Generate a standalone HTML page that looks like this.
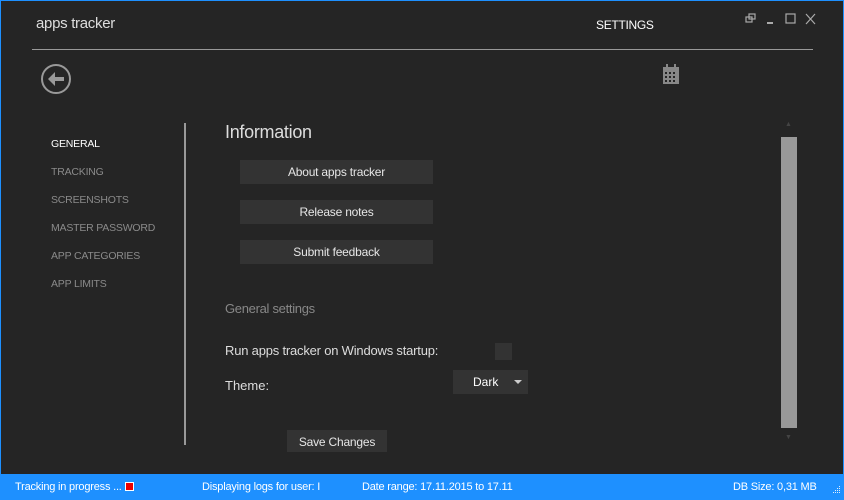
<!DOCTYPE html>
<html><head><style>
*{margin:0;padding:0;box-sizing:border-box}
body{width:844px;height:500px;background:#1e90ff;font-family:"Liberation Sans",sans-serif;overflow:hidden;position:relative}
#win{position:absolute;left:1px;top:1px;width:842px;height:473px;background:#252525}
.t{position:absolute;white-space:nowrap}
.nav{position:absolute;left:50px;font-size:10.5px;color:#8a8a8a;letter-spacing:-0.2px}
.btn{position:absolute;left:239px;width:193px;height:24px;background:#333;color:#e6e6e6;font-size:12px;text-align:center;line-height:24px;letter-spacing:-0.2px}
.sb{position:absolute;top:474px;font-size:11px;color:#fff;line-height:26px;letter-spacing:-0.2px}
</style></head><body>
<div id="win">
<div class="t" style="left:35px;top:14px;font-size:15px;color:#ddd;letter-spacing:-0.3px">apps tracker</div>
<div class="t" style="left:595px;top:17px;font-size:12px;color:#fff;letter-spacing:-0.3px">SETTINGS</div>
<svg style="position:absolute;left:740px;top:11px" width="80" height="16" viewBox="0 0 80 16">
<g fill="none" stroke="#aaa" stroke-width="1.2"><rect x="5" y="5" width="6" height="5"/><rect x="8" y="2" width="6" height="5"/><rect x="45" y="2" width="9" height="9"/><path d="M65 2l9 10M74 2l-9 10"/></g>
<rect x="26" y="10" width="6" height="2" fill="#aaa"/></svg>
<div style="position:absolute;left:31px;top:48px;width:781px;height:1px;background:#999"></div>
<svg style="position:absolute;left:39px;top:62px" width="32" height="32" viewBox="0 0 32 32"><circle cx="16" cy="16" r="14" fill="none" stroke="#999" stroke-width="2"/><path d="M8 16l7-7v5h9v4h-9v5z" fill="#999"/></svg>
<svg style="position:absolute;left:660px;top:62px" width="20" height="22" viewBox="0 0 20 22"><rect x="2" y="4" width="16" height="17" fill="#888"/><rect x="5" y="1" width="2" height="5" fill="#888"/><rect x="13" y="1" width="2" height="5" fill="#888"/><g fill="#252525"><rect x="4" y="9" width="2" height="2"/><rect x="8" y="9" width="2" height="2"/><rect x="12" y="9" width="2" height="2"/><rect x="4" y="13" width="2" height="2"/><rect x="8" y="13" width="2" height="2"/><rect x="12" y="13" width="2" height="2"/><rect x="4" y="17" width="2" height="2"/><rect x="8" y="17" width="2" height="2"/><rect x="12" y="17" width="2" height="2"/></g></svg>
<div class="nav" style="top:137px;color:#fff">GENERAL</div>
<div class="nav" style="top:165px">TRACKING</div>
<div class="nav" style="top:193px">SCREENSHOTS</div>
<div class="nav" style="top:221px">MASTER PASSWORD</div>
<div class="nav" style="top:249px">APP CATEGORIES</div>
<div class="nav" style="top:277px">APP LIMITS</div>
<div style="position:absolute;left:183px;top:122px;width:2px;height:322px;background:#999"></div>
<div class="t" style="left:224px;top:121px;font-size:18px;color:#ddd;letter-spacing:-0.3px">Information</div>
<div class="btn" style="top:159px">About apps tracker</div>
<div class="btn" style="top:199px">Release notes</div>
<div class="btn" style="top:239px">Submit feedback</div>
<div class="t" style="left:224px;top:300px;font-size:13px;color:#888;letter-spacing:-0.3px">General settings</div>
<div class="t" style="left:224px;top:342px;font-size:13px;color:#ddd;letter-spacing:-0.2px">Run apps tracker on Windows startup:</div>
<div style="position:absolute;left:494px;top:342px;width:17px;height:17px;background:#333"></div>
<div class="t" style="left:224px;top:377px;font-size:13px;color:#ddd">Theme:</div>
<div style="position:absolute;left:452px;top:369px;width:75px;height:24px;background:#333;color:#fff;font-size:12px;line-height:24px;padding-left:20px">Dark<span style="position:absolute;left:61px;top:10px;border:4px solid transparent;border-top:4px solid #ccc"></span></div>
<div style="position:absolute;left:286px;top:429px;width:100px;height:22px;background:#333;color:#e6e6e6;font-size:12px;text-align:center;line-height:24px;letter-spacing:-0.2px">Save Changes</div>
<div class="t" style="left:784px;top:120px;font-size:7px;color:#444">▲</div>
<div style="position:absolute;left:780px;top:136px;width:16px;height:291px;background:#999"></div>
<div class="t" style="left:784px;top:433px;font-size:7px;color:#444">▼</div>
</div>
<div class="sb" style="left:15px">Tracking in progress ... <span style="display:inline-block;width:9px;height:9px;background:#e00;border:1px solid #fff;vertical-align:-1px"></span></div>
<div class="sb" style="left:202px">Displaying logs for user: I</div>
<div class="sb" style="left:362px">Date range: 17.11.2015 to 17.11</div>
<div class="sb" style="left:733px">DB Size: 0,31 MB</div>
<svg style="position:absolute;left:830px;top:485px" width="12" height="12" viewBox="0 0 12 12" fill="#dfefff"><rect x="9" y="1" width="1" height="1"/><rect x="7" y="3" width="1" height="1"/><rect x="9" y="3" width="1" height="1"/><rect x="5" y="5" width="1" height="1"/><rect x="7" y="5" width="1" height="1"/><rect x="9" y="5" width="1" height="1"/><rect x="3" y="7" width="1" height="1"/><rect x="5" y="7" width="1" height="1"/><rect x="7" y="7" width="1" height="1"/><rect x="9" y="7" width="1" height="1"/></svg>
</body></html>
